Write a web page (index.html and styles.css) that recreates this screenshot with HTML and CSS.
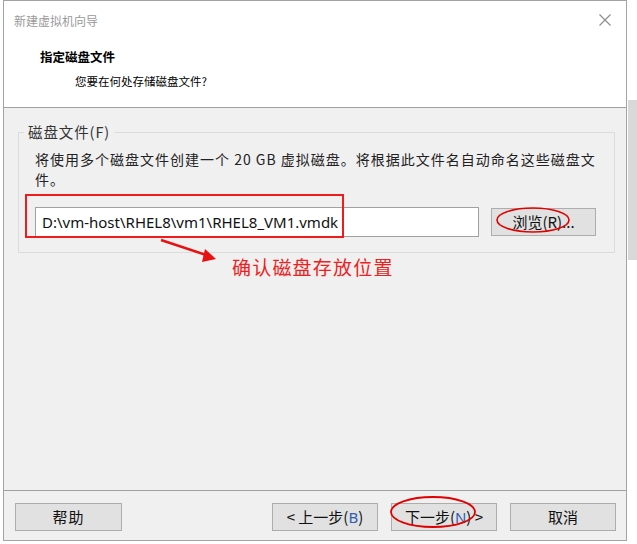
FILE: index.html
```html
<!DOCTYPE html>
<html lang="zh-CN">
<head>
<meta charset="utf-8">
<title>新建虚拟机向导</title>
<link rel="stylesheet" href="styles.css">
</head>
<body>
<div class="page">
  <div class="window">
    <div class="titlebar">
      <span class="title">新建虚拟机向导</span>
      <svg class="close" width="12" height="12" viewBox="0 0 12 12"><path d="M0.5 0.5L11.5 11.5M11.5 0.5L0.5 11.5" stroke="#8a8a8a" stroke-width="1.1" fill="none"/></svg>
    </div>
    <div class="header">
      <div class="heading">指定磁盘文件</div>
      <div class="subheading">您要在何处存储磁盘文件?</div>
    </div>
    <div class="content">
      <div class="group">
        <div class="legend">磁盘文件(F)</div>
        <p class="desc">将使用多个磁盘文件创建一个 20 GB 虚拟磁盘。将根据此文件名自动命名这些磁盘文件。</p>
        <div class="filerow">
          <div class="input">D:\vm-host\RHEL8\vm1\RHEL8_VM1.vmdk</div>
          <div class="btn browse">浏览(R)...</div>
        </div>
      </div>
      <div class="note">确认磁盘存放位置</div>
      <div class="redbox"></div>
      <svg class="overlay" width="637" height="544" viewBox="0 0 637 544">
        <line x1="161" y1="240" x2="206" y2="255" stroke="#e81010" stroke-width="2.4"/>
        <polygon points="216,259 202,262 205,249" fill="#e81010"/>
        <ellipse cx="533" cy="220" rx="36" ry="12" fill="none" stroke="#e00000" stroke-width="1.6"/>
        <ellipse cx="433" cy="512" rx="42" ry="15" fill="none" stroke="#e00000" stroke-width="1.8"/>
      </svg>
    </div>
    <div class="footer">
      <div class="btn wide">帮助</div>
      <div class="spacer"></div>
      <div class="btn">&lt; 上一步(<span class="blue">B</span>)</div>
      <div class="btn">下一步(<span class="blue">N</span>) &gt;</div>
      <div class="btn">取消</div>
    </div>
  </div>
  <div class="strip"></div>
</div>
</body>
</html>
```
FILE: styles.css
```css
* { box-sizing: border-box; }
html, body { margin: 0; padding: 0; background: #ffffff; }
body {
  font-family: "Noto Sans CJK SC", "Noto Sans", sans-serif;
  color: #000;
  width: 637px;
  height: 544px;
  overflow: hidden;
}
.page { display: flex; align-items: flex-start; }
.window {
  margin-left: 3px;
  width: 624px;
  height: 541px;
  border: 1px solid #a3a3a3;
  display: flex;
  flex-direction: column;
  background: #f0f0f0;
  position: relative;
}
.strip {
  margin-top: 100px;
  margin-left: 1px;
  width: 9px;
  height: 160px;
  background: #d9d9d9;
}
.titlebar {
  height: 38px;
  background: #fff;
  display: flex;
  align-items: center;
  justify-content: space-between;
  padding: 0 15px 0 10px;
}
.title { font-size: 12px; color: #9a9a9a; }
.header {
  height: 69px;
  background: #fff;
  border-bottom: 1px solid #a0a0a0;
  padding: 8px 0 0 36px;
}
.heading { font-size: 12.5px; font-weight: bold; line-height: 20px; }
.subheading { font-size: 11.5px; line-height: 20px; padding-left: 35px; margin-top: 4px; }
.content { flex: 1; position: relative; padding: 24px 11px 0 14px; }
.group {
  border: 1px solid #dcdcdc;
  height: 121px;
  position: relative;
  padding: 16px 15px 0 16px;
}
.legend {
  position: absolute;
  top: -11px;
  left: 5px;
  padding: 0 4px;
  background: #f0f0f0;
  font-size: 14.5px;
  line-height: 20px;
  letter-spacing: 0.9px;
  color: #333;
}
.desc {
  margin: 0;
  font-size: 14px;
  line-height: 20px;
  letter-spacing: 1px;
  color: #222;
}
.filerow { display: flex; align-items: center; margin-top: 18px; gap: 12px; }
.input {
  width: 444px;
  height: 30px;
  background: #fff;
  border: 1px solid #a0a0a0;
  font-family: "Noto Sans", sans-serif;
  font-size: 15px;
  line-height: 28px;
  padding-left: 6px;
  color: #111;
}
.btn {
  width: 106px;
  height: 28px;
  background: #e1e1e1;
  border: 1px solid #adadad;
  font-size: 15px;
  line-height: 26px;
  text-align: center;
  color: #111;
}
.btn.wide { width: 107px; letter-spacing: 1px; }
.browse { width: 105px; }
.blue { color: #2c5fb3; font-family: "Noto Sans", sans-serif; }
.note {
  font-size: 19px;
  color: #f02020;
  margin: 2px 0 0 214px;
  line-height: 24px;
  letter-spacing: 1.2px;
}
.redbox {
  position: absolute;
  left: 21px;
  top: 86px;
  width: 319px;
  height: 44px;
  border: 2.5px solid #ee1c1c;
}
.overlay { position: absolute; left: -4px; top: -108px; pointer-events: none; overflow: visible; z-index: 5; }
.footer {
  height: 50px;
  border-top: 1px solid #a0a0a0;
  display: flex;
  align-items: flex-start;
  padding: 12px 10px 0 11px;
  gap: 13px;
}
.spacer { flex: 1; }
```
